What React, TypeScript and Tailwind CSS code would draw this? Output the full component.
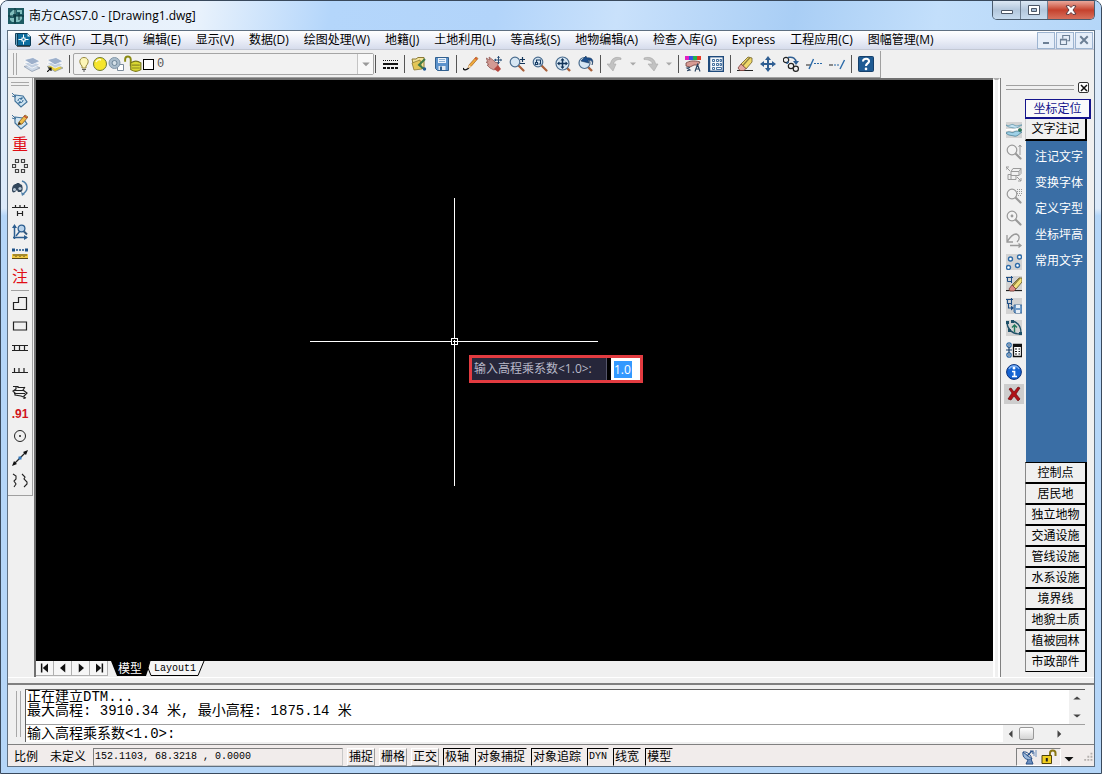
import React from "react";

const UI = "font-['Open_Sans','Noto_Sans_CJK_SC',sans-serif]";
const SONG = "font-['Liberation_Mono','Noto_Sans_CJK_SC',monospace]";

function Icon({ children, className = "size-4" }: { children: React.ReactNode; className?: string }) {
  return (
    <svg viewBox="0 0 16 16" className={`${className} shrink-0`} fill="none" aria-hidden="true">
      {children}
    </svg>
  );
}

function Lens({ color = "#4a6c8e", fill = "#d6e6f3", handle = "#a8603a" }: { color?: string; fill?: string; handle?: string }) {
  return (
    <>
      <path d="M9.5 9.5 14.5 14.5" stroke={handle} strokeWidth="2.2" strokeLinecap="round" />
      <circle cx="6" cy="6" r="4.8" fill={fill} stroke={color} strokeWidth="1.2" />
    </>
  );
}

function Layers({ last }: { last: string }) {
  return (
    <g strokeWidth=".7">
      <path d="M0 10.500 9 8.500l7 3.500-8 3.500z" fill={last} stroke="#8593a8" />
      <path d="M0 7.300 9 5.300l7 3.500-8 3.300z" fill="#c0cee0" stroke="#fff" />
      <path d="M0 3.800 9 1.500l7 3.700-8 3.600z" fill="#9db0cb" stroke="#fff" />
    </g>
  );
}

const Logo = (
  <>
    <rect width="16" height="16" fill="#1d5a63" />
    <path d="M2 8V5l3-3h3v4H5v3zM9 2h5v4h-2V4H9zM8 8h6v3l-3 3H8zM2 10h4v4H4l-2-2z" fill="#82bdbd" />
    <path d="M7 0v16M0 8h16M11 5v7" stroke="#0b3138" />
  </>
);

const Doc = (
  <>
    <path d="M.5 1.500h3v12h-2l-1-1z" fill="#6aa5c4" stroke="#16445f" />
    <path d="M2.500 1.500h10l3 3v9h-13z" fill="#0d6d9e" stroke="#0c3b57" />
    <path d="M12.500 1.500v3h3z" fill="#e8f4fa" />
    <path d="M8.500 2.500v10M3.500 7.500h10" stroke="#fff" />
    <rect x="7" y="6" width="3" height="3" fill="#0d6d9e" stroke="#fff" />
    <path d="M2 14.500h13" stroke="#555" />
  </>
);

const mainGroups: { name: string; art: React.ReactNode; narrow?: boolean }[][] = [
  [
    {
      name: "线型",
      art: (
        <>
          <path d="M1 4.500h15" stroke="#111" strokeDasharray="1 1" />
          <path d="M1 8h15" stroke="#111" strokeWidth="2" />
          <path d="M1 12h15" stroke="#111" strokeWidth="2" strokeDasharray="3 1" />
        </>
      ),
    },
  ],
  [
    {
      name: "打开",
      art: (
        <>
          <path d="M1 3h4l2-1.500h6V12H3z" fill="#f3e39a" stroke="#8c7a35" />
          <path d="M3 14 1 7l8-3 2 9z" fill="#e3c657" stroke="#8c7a35" strokeWidth=".8" />
          <path d="M14 3 8 9l5 4" stroke="#3f7a46" strokeWidth="2" />
          <circle cx="13.500" cy="13" r="1.700" fill="#225a94" />
        </>
      ),
    },
    {
      name: "保存",
      art: (
        <>
          <path d="M1.500 1.500h13v13h-11l-2-2z" fill="#5d93cc" stroke="#31608f" />
          <path d="M4 2h8v5H4z" fill="#eef4fb" />
          <path d="M5 3.500h6M5 5.500h6" stroke="#8cb0d4" />
          <path d="M4.500 10h7v4h-7z" fill="#dfe8f1" />
          <path d="M6 10.500h2V14H6z" fill="#31608f" />
        </>
      ),
    },
  ],
  [
    {
      name: "画笔",
      art: (
        <>
          <path d="M0 12c1 3 3 2 6 0" stroke="#111" strokeWidth="1.400" />
          <path d="m5 12 1-3 7-8 2 1.500-7 8z" fill="#efaa3b" stroke="#a45e1b" strokeWidth=".7" />
          <path d="m5 12 1-3 2 1.500z" fill="#f8e3bd" />
          <path d="m12 2 2 1.500" stroke="#d4503c" strokeWidth="1.500" />
        </>
      ),
    },
    {
      name: "平移",
      art: (
        <>
          <path d="m0 2 4 2-1-3 4 3 3 3 1-1 1 3-1 3-3 2-4-2-3-3 2-.500L0 6l2 0z" fill="#d39a93" stroke="#96605a" strokeWidth=".8" />
          <path d="m8 13 4-4 3 4-3 3z" fill="#b5473f" />
          <path d="M12.500 0v8M8.500 4h7" stroke="#2b5078" />
          <path d="m11 2 1.500-2L14 2zM11 6l1.500 2L14 6zM10 2.500 8 4l2 1.500zM14.500 2.500 16 4l-1.500 1.500z" fill="#2b5078" />
        </>
      ),
    },
    {
      name: "实时缩放",
      art: (
        <>
          <Lens />
          <path d="M11 3.500h5M13.500 1v5M11 7.500h5" stroke="#14365a" strokeWidth="1.200" />
        </>
      ),
    },
    {
      name: "窗口缩放",
      art: (
        <>
          <Lens />
          <path d="M4.500 6V4h4v4h-2M3.500 8.500h2v-2h-2z" stroke="#1b3e66" strokeWidth="1.100" />
        </>
      ),
    },
    {
      name: "全图",
      art: (
        <>
          <path d="m11 11 4 4" stroke="#a8603a" strokeWidth="2.400" />
          <circle cx="7.500" cy="7.500" r="6.500" fill="#d6e6f3" stroke="#4a6c8e" strokeWidth="1.200" />
          <path d="M7.500 3v9M3 7.500h9" stroke="#12345a" strokeWidth="1.500" />
          <path d="m5.500 4.500 2-2.500 2 2.500zM5.500 10.500l2 2.500 2-2.500zM4.500 5.500 2 7.500l2.500 2zM10.500 5.500l2.500 2-2.500 2z" fill="#12345a" />
        </>
      ),
    },
    {
      name: "前图",
      art: (
        <>
          <path d="m10 11 4 4" stroke="#a8603a" strokeWidth="2.400" />
          <circle cx="6.500" cy="7" r="5.500" fill="#d6e6f3" stroke="#4a6c8e" strokeWidth="1.200" />
          <path d="M14 9c1-3 0-5-4-5l1 3-8-2 5-5 .5 2C14 1 16 4 14 9z" fill="#1c4f8e" stroke="#12345a" strokeWidth=".6" />
        </>
      ),
    },
  ],
  [
    {
      name: "放弃",
      art: <path d="M14 2C8 0 4 3 3.500 8H0l6 7 3-7H6.500C7 5 10 3 14 3.500z" fill="#c2c2c2" stroke="#a8a8a8" strokeWidth=".6" />,
    },
    { name: "放弃列表", narrow: true, art: <path d="M4 6h8l-4 4z" fill="#a8a8a8" /> },
    {
      name: "重做",
      art: <path d="M1 2c6-2 11 1 11.500 6H15l-4 7-6-7h4.500C9 5 6 3.500 1 3.500z" fill="#c2c2c2" stroke="#a8a8a8" strokeWidth=".6" />,
    },
    { name: "重做列表", narrow: true, art: <path d="M4 6h8l-4 4z" fill="#a8a8a8" /> },
  ],
  [
    {
      name: "特性匹配",
      art: (
        <>
          <path d="M0 0h4v4H0z" fill="#e01fc2" />
          <path d="M4 0h4v4H4z" fill="#3553e0" />
          <path d="M8 0h4v4H8z" fill="#21b34c" />
          <path d="M12 0h4v4h-4z" fill="#e33a26" />
          <path d="M1 7c3-2 8-3 14-1l-2 3-4 0-4 2-4-1z" fill="#d89b94" stroke="#6e3c37" strokeWidth=".8" />
          <path d="m5 11.500-3 .5 3 2-3 .7M10 15.500l2.500-7 2.500 7M11 13h3" stroke="#28415f" strokeWidth="1.100" />
        </>
      ),
    },
    {
      name: "工具选项板",
      art: (
        <>
          <rect x=".7" y=".7" width="14.600" height="14.600" fill="#f3f7fb" stroke="#1e4a7c" strokeWidth="1.400" />
          <path d="M1 1v14" stroke="#1e4a7c" strokeWidth="2.500" />
          <path d="M4.500 3.500h2v2h-2zM4.500 7.500h2v2h-2zM4.500 11.500h2v2h-2zM8.500 3.500h2v2h-2zM8.500 7.500h2v2h-2zM12 3.500h1.500v2H12zM12 7.500h1.500v2H12zM8.500 11.500h5v2h-5z" stroke="#305f92" strokeWidth=".9" />
        </>
      ),
    },
  ],
  [
    {
      name: "删除",
      art: (
        <>
          <path d="M0 14.500h16" stroke="#222" />
          <path d="m4 8 7-7 4 1v4l-6 7z" fill="#f0d96b" stroke="#6e602b" strokeWidth=".8" />
          <path d="m13 1.500-8 9" stroke="#8b7c3c" strokeWidth="1.200" />
          <path d="m1 12 3-4 5 4.500-2 2H3z" fill="#e3a8a2" stroke="#7c403b" strokeWidth=".8" />
        </>
      ),
    },
    {
      name: "移动",
      art: (
        <>
          <path d="M8 2v12M2 8h12" stroke="#2f5e92" strokeWidth="2" />
          <path d="m5 4 3-4 3 4zM5 12l3 4 3-4zM4 5 0 8l4 3zM12 5l4 3-4 3z" fill="#2f5e92" />
        </>
      ),
    },
    {
      name: "复制",
      art: (
        <>
          <circle cx="3" cy="4" r="2.700" stroke="#222" strokeWidth="1.200" />
          <circle cx="8" cy="10" r="2.700" stroke="#222" strokeWidth="1.200" />
          <circle cx="12.800" cy="12.800" r="2.600" stroke="#222" strokeWidth="1.200" />
          <path d="M5 1.500c5-1 8 1 8 5M6 6c-1 0-2 1-2 2" stroke="#2d5d92" strokeWidth="1.500" />
          <path d="M10 5h6l-3 4z" fill="#2d5d92" />
        </>
      ),
    },
    {
      name: "修剪",
      art: (
        <>
          <path d="M0 9h5" stroke="#222" strokeWidth="1.200" />
          <path d="M3 13 7.500 3" stroke="#2b6aa8" strokeWidth="1.400" />
          <path d="M8 7.500h8" stroke="#2b6aa8" strokeWidth="1.200" strokeDasharray="2 1" />
        </>
      ),
    },
    {
      name: "延伸",
      art: (
        <>
          <path d="M0 9h4" stroke="#222" strokeWidth="1.200" />
          <path d="M5 9h6" stroke="#2b6aa8" strokeWidth="1.200" strokeDasharray="2 1" />
          <path d="M11 13 15.500 4" stroke="#2b6aa8" strokeWidth="1.400" />
        </>
      ),
    },
  ],
  [
    {
      name: "帮助",
      art: (
        <>
          <rect x=".5" y=".5" width="15" height="15" rx="1" fill="#1f5b93" stroke="#16406b" />
          <path d="M5 5.500c0-4 6.500-3.500 6 0-.3 2-3 2-3 4.500" stroke="#fff" strokeWidth="2.100" />
          <circle cx="8" cy="12.900" r="1.300" fill="#fff" />
        </>
      ),
    },
  ],
];

const Tag = (
  <>
    <path d="m3 3 8 1 4 6-6 5-6-6z" fill="#cfe4f1" stroke="#43749c" strokeWidth="1.200" />
    <path d="M0 1l4 4M0 4l3 1" stroke="#43749c" />
  </>
);

const leftTop: { name: string; art?: React.ReactNode; text?: string }[] = [
  {
    name: "查看实体编码",
    art: (
      <>
        {Tag}
        <path d="M6 9c0-3 3-3 4-2M11 8c0 3-3 3-4 2M10 5v2H8M7 12v-2h2" stroke="#2a6291" />
      </>
    ),
  },
  {
    name: "加入实体编码",
    art: (
      <>
        {Tag}
        <path d="m6 11 1-3 6-7 3 2-6 7z" fill="#f0bd4a" stroke="#865b1c" strokeWidth=".8" />
        <path d="m12 2 3 2" stroke="#c24a3a" strokeWidth="1.500" />
        <path d="m6 11 1-3 2 1.500z" fill="#222" />
      </>
    ),
  },
  { name: "重构", text: "重" },
  {
    name: "批量选目标",
    art: (
      <path
        d="M3.500 1.500h3v3h-3zM9.500 1.500h3v3h-3zM.5 6.500h3v3h-3zM12.500 6.500h3v3h-3zM3.500 11.500h3v3h-3zM9.500 11.500h3v3h-3z"
        stroke="#444"
        strokeWidth="1.200"
      />
    ),
  },
  {
    name: "线型换向",
    art: (
      <>
        <path d="M0 10c0-4 2-6 4-6l1-1h2l1 1 2 1c1 3 1 6-1 7H6l-1-2-2 2c-2 1-3 0-3-2z" fill="#33475c" />
        <circle cx="2.500" cy="9.500" r="1.500" fill="#b6c5d3" />
        <circle cx="8" cy="8.500" r="1.600" fill="#b6c5d3" />
        <path d="M10 1c6 2 7 9 1 13" stroke="#4f7fa8" strokeWidth="1.500" />
        <path d="m9 12 1 4 3-2z" fill="#4f7fa8" />
      </>
    ),
  },
  { name: "坎高", art: <path d="M0 5.500h16M3.500 3v2.500M8 3v2.500M12.500 3v2.500M5.500 9v5M10.500 9v5M5.500 11.500h5" stroke="#222" strokeWidth="1.200" /> },
  {
    name: "坐标查询",
    art: (
      <>
        <path d="M2.500 15V2M1 13.500h14" stroke="#2c5e90" strokeWidth="1.500" />
        <path d="m0 4 2.500-4L5 4zM12 11l4 2.500-4 2.500z" fill="#2c5e90" />
        <path d="m4 12 4-5" stroke="#2c5e90" strokeWidth="1.400" />
        <circle cx="9.500" cy="4.500" r="3.400" fill="#b8d2ea" stroke="#2c5e90" strokeWidth="1.300" />
        <path d="m12 7.500 3 3" stroke="#34587c" strokeWidth="2" />
      </>
    ),
  },
  {
    name: "距离查询",
    art: (
      <>
        <path d="M1 4h14" stroke="#1b4f86" strokeWidth="1.500" strokeDasharray="2 1" />
        <path d="M0 2.500h3v3H0zM13 2.500h3v3h-3z" fill="#1b4f86" />
        <path d="M0 8h16v5H0z" fill="#f1c945" />
        <path d="M0 12.500h16M2 8v2M4 8v3M6 8v2M8 8v3M10 8v2M12 8v3M14 8v2" stroke="#5b4a12" />
      </>
    ),
  },
  { name: "文字注记", text: "注" },
];

const leftBottom: { name: string; art?: React.ReactNode; text?: string }[] = [
  { name: "多点房屋", art: <path d="M1.500 6.500h5v-5h8v12h-13z" stroke="#222" strokeWidth="1.200" /> },
  { name: "四点房屋", art: <path d="M1.500 4h13v8h-13z" stroke="#222" strokeWidth="1.200" /> },
  { name: "依比例围墙", art: <path d="M0 5.500h16M0 10.500h16M2.500 5v5M7.500 5v5M12.500 5v5" stroke="#222" strokeWidth="1.200" /> },
  { name: "陡坎", art: <path d="M0 10.500h16M2.500 6v4M7 6v4M12 6v4" stroke="#222" strokeWidth="1.200" /> },
  {
    name: "坡坎",
    art: <path d="M1 2.500h5v1h7M4 2v3L1 7l2 2v2l6 1 5 2M13 3l-2 3 4 3-3 3v3M2 6.500h9M2 9.500h11" stroke="#222" strokeWidth="1.200" />,
  },
  { name: "高程点", text: ".91" },
  {
    name: "图根点",
    art: (
      <>
        <circle cx="8" cy="8" r="5.500" stroke="#222" />
        <circle cx="8" cy="8" r="1" fill="#222" />
      </>
    ),
  },
  {
    name: "直线",
    art: (
      <>
        <path d="M2 14 14 2" stroke="#222" strokeWidth="1.300" />
        <path d="m0 16 2-5 3 3zM16 0l-5 2 3 3z" fill="#111" />
        <rect x="6.500" y="6.500" width="3" height="3" fill="#2f74b8" />
      </>
    ),
  },
  { name: "曲线", art: <path d="m1 2 3 2v3L2 9l2 3-2 3M10 2l3 3-1 2 3 3v2l-3 3" stroke="#222" strokeWidth="1.100" /> },
];

const gray = "#9a9a9a";
const rightIcons: { name: string; tint?: boolean; art: React.ReactNode }[] = [
  {
    name: "图层",
    tint: true,
    art: (
      <>
        <path d="M0 3c4 2 5-2 8 0s5 0 8 0c-3 1-5 4-8 3S3 6 0 3z" fill="#c5e3f2" stroke="#6599ad" strokeWidth=".8" />
        <path d="M0 11c4-3 5 1 8-1s5 0 8 0c-3 2-5 5-8 4s-5 0-8-3z" fill="#9ed0e6" stroke="#4b8198" strokeWidth=".8" />
        <path d="M0 8c4-1 7 1 12-1" stroke="#fff" strokeWidth="2" />
        <path d="M12 8h4M14 6v4" stroke="#1f7050" strokeWidth="1.300" />
      </>
    ),
  },
  {
    name: "实时缩放",
    art: (
      <>
        <Lens color={gray} fill="#f3f3f3" handle={gray} />
        <path d="M14 1v10M12.500 3 14 1l1.500 2" stroke={gray} />
      </>
    ),
  },
  {
    name: "三维视图",
    art: (
      <>
        <path d="M5 5.500h8v4H5zM5 5.500l2-3h8l-2 3M15 2.500v5l-2 2M2 8.500h3v5h5v-4M2 8.500v5h3" stroke={gray} />
        <path d="m0 1 4 4M0 4V1h3M11 11l4 4M15 12v3h-3" stroke={gray} />
      </>
    ),
  },
  {
    name: "范围缩放",
    art: (
      <>
        <Lens color={gray} fill="#f3f3f3" handle={gray} />
        <path d="M11 1.500h5M11 3.500h5M11 5.500h5M12 7.500h4" stroke={gray} strokeDasharray="1 1" />
      </>
    ),
  },
  {
    name: "中心缩放",
    art: (
      <>
        <Lens color={gray} fill="#f3f3f3" handle={gray} />
        <circle cx="6" cy="6" r="1.400" fill={gray} />
      </>
    ),
  },
  {
    name: "回退",
    art: <path d="M1 3v7h6M1 10c3-5 6-8 9-8 4 1 4 5 1 8M4 13.500h11M12.500 11.500l2.500 2-2.500 2" stroke={gray} strokeWidth="1.300" />,
  },
  {
    name: "选点",
    tint: true,
    art: (
      <g fill="#fff" stroke="#2f6ca8" strokeWidth="1.400">
        <circle cx="4.500" cy="5" r="2" />
        <circle cx="13.500" cy="3" r="2" />
        <circle cx="2.500" cy="13.500" r="2" />
        <circle cx="11.500" cy="11.500" r="2" />
      </g>
    ),
  },
  {
    name: "擦除",
    tint: true,
    art: (
      <>
        <path d="M1.500 1.500h4v4h-4zM0 1.500h7M5.500 0v7" stroke="#1f4f86" />
        <path d="M0 14.500h16" stroke="#222" />
        <path d="m6 9 7-7 3 0v4l-6 7z" fill="#f3e17c" stroke="#5b5024" strokeWidth=".8" />
        <path d="m14 2-7 8" stroke="#8b7c3c" strokeWidth="1.200" />
        <path d="m3 13 3-4 4 4-2 2H4z" fill="#dc8b85" stroke="#7c403b" strokeWidth=".8" />
      </>
    ),
  },
  {
    name: "保存块",
    tint: true,
    art: (
      <>
        <path d="M1.500 1.500h4v4h-4zM0 1.500h7M5.500 0v7M2.500 6v4H6" stroke="#1f4f86" strokeWidth="1.100" />
        <path d="m5 7.500 3 2.500-3 2.500z" fill="#1f4f86" />
        <path d="M8 7h8v8H9l-1-1z" fill="#6f9bc9" stroke="#44719f" />
        <path d="M10 7h4v3h-4zM10 12h4v3h-4z" fill="#e6eef6" />
      </>
    ),
  },
  {
    name: "编辑曲线",
    tint: true,
    art: (
      <>
        <path d="M1 2c0 6 4 12 13 12M6 1c5 1 9 5 9 12" stroke="#1f5068" strokeWidth="1.300" />
        <path d="M8.500 12V5M6 7.500 8.500 5 11 7.500" stroke="#20775b" strokeWidth="1.400" />
        <path d="M0 1h3v3H0zM5 0h3v3H5zM13 12h3v3h-3zM2 9h3v3H2z" fill="#1f5068" />
      </>
    ),
  },
  {
    name: "列表",
    art: (
      <>
        <circle cx="3" cy="3" r="2.200" stroke="#2f6ca8" strokeWidth="1.300" />
        <circle cx="3" cy="13" r="2.200" stroke="#2f6ca8" strokeWidth="1.300" />
        <path d="M3 5v6M0 8h6M2 3h2M2 13h2" stroke="#173f6c" strokeWidth="1.200" />
        <path d="M7.500 2.500h8v12h-8z" fill="#fff" stroke="#111" strokeWidth="1.300" />
        <path d="M7 4h9" stroke="#111" strokeWidth="2" />
        <path d="M9 7h2M12.500 7H14M9 9.500h2M12.500 9.500H14M9 12h2M12.500 12H14" stroke="#111" />
      </>
    ),
  },
  {
    name: "信息",
    art: (
      <>
        <circle cx="8" cy="8" r="7.400" fill="#1563d2" stroke="#0b2f78" />
        <path d="M3 5c2-4 8-4 10 0" stroke="#7fb2f4" strokeWidth="1.500" />
        <circle cx="8" cy="4" r="1.500" fill="#fff" />
        <path d="M6 7.500h2.500v5M6 12.500h5" stroke="#fff" strokeWidth="1.700" />
      </>
    ),
  },
  {
    name: "关闭",
    tint: true,
    art: <path d="m3 3 2-1 3 4 4-5 2 1-4 6 4 5-2 2-4-5-3 4-3-1 4-6z" fill="#b01218" stroke="#6f080c" strokeWidth=".7" />,
  },
];

const menus = [
  "文件(F)", "工具(T)", "编辑(E)", "显示(V)", "数据(D)", "绘图处理(W)", "地籍(J)", "土地利用(L)",
  "等高线(S)", "地物编辑(A)", "检查入库(G)", "Express", "工程应用(C)", "图幅管理(M)",
];
const annotations = ["注记文字", "变换字体", "定义字型", "坐标坪高", "常用文字"];
const categories = ["控制点", "居民地", "独立地物", "交通设施", "管线设施", "水系设施", "境界线", "地貌土质", "植被园林", "市政部件"];
const modes = [
  { label: "捕捉", on: false },
  { label: "栅格", on: false },
  { label: "正交", on: false },
  { label: "极轴", on: true },
  { label: "对象捕捉", on: true },
  { label: "对象追踪", on: true },
  { label: "DYN", on: true },
  { label: "线宽", on: true },
  { label: "模型", on: true },
];

function TitleBar() {
  return (
    <header className="flex h-[29px] shrink-0 items-start bg-[linear-gradient(100deg,#e4effb_0%,#e9f2fc_18%,#b4d6fb_30%,#b2d4fa_45%,#c9e1fb_56%,#a9cef5_72%,#c3dffb_85%,#b4d6f8_100%)] pl-[7px]">
      <div className="flex h-[29px] flex-1 items-center gap-[5px]">
        <Icon>{Logo}</Icon>
        <h1 className="text-xs whitespace-nowrap text-black">南方CASS7.0 - [Drawing1.dwg]</h1>
      </div>
      <div className="mr-[6px] flex h-[19px] overflow-hidden rounded-b-[5px] border border-t-0 border-[#4b5c6e]">
        <button aria-label="最小化" className="flex w-7 items-center justify-center border-r border-[#6d7e91] bg-linear-to-b from-[#dce8f4] via-[#b3c7dc] to-[#c7dbef]">
          <Icon><path d="M2.500 8.500h11v3h-11z" fill="#fff" stroke="#4b5666" /></Icon>
        </button>
        <button aria-label="最大化" className="flex w-[27px] items-center justify-center border-r border-[#6d7e91] bg-linear-to-b from-[#dce8f4] via-[#b3c7dc] to-[#c7dbef]">
          <Icon><path d="M2.500 3.500h11v9h-11z" fill="#fff" stroke="#4b5666" /><path d="M5.500 6.500h5v3h-5z" fill="#a9bfd6" stroke="#4b5666" /></Icon>
        </button>
        <button aria-label="关闭" className="flex w-[46px] items-center justify-center bg-linear-to-b from-[#e8a79b] via-[#c5402c] to-[#d7705c]">
          <Icon><path d="m3 4 3-.5 2 2 2-2 3 .5-3 4 3 4-3 .5-2-2-2 2-3-.5 3-4z" fill="#fff" stroke="#5a3a40" /></Icon>
        </button>
      </div>
    </header>
  );
}

function MenuBar() {
  const mdi = "flex h-[17px] w-[18px] items-center justify-center border border-[#9db4d0] bg-[#e6eef9]";
  return (
    <nav aria-label="菜单" className="flex h-[19px] shrink-0 items-center border-b border-[#c3c8d4] bg-linear-to-b from-white via-[#eceff8] to-[#d6dcec] pl-[7px]">
      <Icon>{Doc}</Icon>
      <div className="ml-[7px] flex flex-1 gap-[15px]">
        {menus.map((m) => (
          <button key={m} className="text-xs leading-4 whitespace-nowrap text-black">{m}</button>
        ))}
      </div>
      <div className="mr-px flex gap-px">
        <button aria-label="最小化图形" className={mdi}><Icon className="size-3"><path d="M4 12h8" stroke="#6c7f95" strokeWidth="2.500" /></Icon></button>
        <button aria-label="还原图形" className={mdi}><Icon className="size-3"><path d="M5 6V2h9v7h-3M2 7h8v7H2zM2 8h8" stroke="#6c7f95" strokeWidth="1.500" /></Icon></button>
        <button aria-label="关闭图形" className={mdi}><Icon className="size-3"><path d="m3 3 10 10M13 3 3 13" stroke="#6c7f95" strokeWidth="2.600" /></Icon></button>
      </div>
    </nav>
  );
}

function Separator() {
  return <span className="mr-[2px] ml-[3px] h-[18px] w-px bg-[#555]" />;
}

function Toolbar() {
  const btn = "flex h-5 w-[23px] items-center justify-center";
  return (
    <div className="flex h-7 shrink-0 items-start bg-[#f0f0f0] pt-px">
      <div role="toolbar" aria-label="标准" className="flex h-[27px] items-center border-r border-b border-[#a0a0a0] pr-[3px] pl-[5px]">
        <span className="mr-[3px] h-[22px] w-1 border-x border-[#a8a8a8]" />
        <button aria-label="图层管理" className={btn}><Icon><Layers last="#cbd7e6" /></Icon></button>
        <button aria-label="图层置为当前" className={btn}>
          <Icon><Layers last="#e8cf3a" /><path d="m0 16 4-4M1 12h3v3" stroke="#111" strokeWidth="1.200" /></Icon>
        </button>
        <Separator />
        <div className="ml-px flex h-[22px] w-[301px] items-center rounded-xs border border-[#a5a5a5] bg-[#f2f2f2] pl-[2px]">
          <Icon>
            <path d="M6 10C2 6 4 1.500 8 1.500s6 4.500 2 8.500v2H6z" fill="#fdf6b8" stroke="#8a7a2a" strokeWidth=".9" />
            <path d="M6 13.500h4M7 15h2" stroke="#5c5c5c" strokeWidth="1.200" />
          </Icon>
          <Icon>
            <circle cx="8" cy="8" r="6.500" fill="#f6e52c" stroke="#6f7a35" />
            <path d="M4 6c1-2 3-3 5-2" stroke="#fffbd0" strokeWidth="1.500" />
          </Icon>
          <Icon>
            <path d="M9.500 8.500h6v6h-6z" fill="#fff" stroke="#7a8a9a" />
            <circle cx="6.500" cy="7" r="5.500" fill="#a9bccb" stroke="#8398aa" />
            <circle cx="6.500" cy="7" r="2.500" fill="#d5e0e8" stroke="#6d8699" />
          </Icon>
          <Icon className="size-[18px]">
            <path d="M1 6V4c0-3.500 5-3.500 5 0v6" stroke="#8a8a12" strokeWidth="1.700" />
            <path d="M6 7c3-2 6-2 9 0v6c-3 2-6 2-9 0z" fill="#d9d732" stroke="#77751a" />
            <path d="M7 9h7M7 11.500h7" stroke="#8b8920" />
          </Icon>
          <span className="mr-[3px] ml-px size-[11px] border border-black bg-white" />
          <select aria-label="图层" className={`${SONG} h-4 flex-1 appearance-none bg-transparent text-xs leading-4 text-[#555] outline-none`}>
            <option>0</option>
          </select>
          <span className="flex h-full w-4 items-center justify-center border-l border-[#c4c4c4] bg-[#f8f8f8]">
            <Icon className="size-3"><path d="M3 6h10l-5 5z" fill="#9a9a9a" /></Icon>
          </span>
        </div>
        {mainGroups.map((g, i) => (
          <React.Fragment key={i}>
            {i === 0 ? <span className="mr-[2px] ml-px h-[18px] w-px bg-[#555]" /> : <Separator />}
            {g.map((t) => (
              <button key={t.name} aria-label={t.name} className={t.narrow ? "flex h-5 w-[13px] items-center justify-center" : btn}>
                <Icon className={t.narrow ? "size-3" : "size-4"}>{t.art}</Icon>
              </button>
            ))}
          </React.Fragment>
        ))}
      </div>
    </div>
  );
}

function ToolColumn({ items }: { items: typeof leftTop }) {
  return (
    <>
      {items.map((t) => (
        <button key={t.name} aria-label={t.name} className="flex h-[22px] w-6 items-center justify-center">
          {t.art ? (
            <Icon>{t.art}</Icon>
          ) : (
            <span className={t.text === ".91" ? "font-['Liberation_Sans',sans-serif] text-xs leading-4 font-bold text-[#d0141c]" : "text-base leading-5 text-[#e00d14]"}>{t.text}</span>
          )}
        </button>
      ))}
    </>
  );
}

function LeftToolbar() {
  return (
    <aside className="w-[26px] shrink-0 bg-[#f0f0f0]">
      <div role="toolbar" aria-orientation="vertical" aria-label="CASS实用工具栏" className="flex w-[25px] flex-col border-r border-b border-[#a0a0a0] pt-1 pb-1">
        <span className="mx-[3px] mb-[3px] h-1 border-y border-[#a8a8a8]" />
        <ToolColumn items={leftTop} />
        <span className="mx-[3px] mt-[3px] mb-[2px] h-px bg-[#a0a0a0]" />
        <ToolColumn items={leftBottom} />
      </div>
    </aside>
  );
}

function DrawingArea() {
  return (
    <section aria-label="绘图区" className="relative min-h-0 flex-1 overflow-hidden bg-black">
      <svg className="absolute top-[118px] left-[274px] h-[288px] w-[288px]" viewBox="0 0 288 288" shapeRendering="crispEdges" fill="none" stroke="#fff" aria-hidden="true">
        <path d="M144.500 0v288M0 143.500h288" />
        <rect x="141.500" y="140.500" width="6" height="6" fill="#000" />
        <path d="M144.500 142v4M143 143.500h4" />
      </svg>
      <div className="absolute top-[275px] left-[433px] flex h-7 w-[174px] items-stretch border-[3px] border-[#e23b40] bg-black">
        <label htmlFor="dyn" className="flex w-[135px] items-center border-r border-[#55556a] bg-[#26263a] pl-[2px] text-xs whitespace-nowrap text-[#b8b8c8]">
          输入高程乘系数&lt;1.0&gt;:
        </label>
        <span className="ml-1 flex flex-1 items-center bg-white pl-[3px]">
          <input id="dyn" defaultValue="1.0" className="h-[17px] w-[18px] bg-[#3399ff] p-0 text-xs leading-4 text-white outline-none" />
        </span>
      </div>
    </section>
  );
}

function LayoutTabs() {
  const nav = "flex h-[15px] w-[18px] items-center justify-center border-r border-b border-[#b0b0b0] bg-[#f6f6f6]";
  return (
    <div className="flex h-4 shrink-0 bg-[#f0f0f0]">
      <div className="flex">
        <button aria-label="首个布局" className={nav}><Icon className="size-3"><path d="M3.500 2v12" stroke="#111" strokeWidth="2" /><path d="M12 2v12L5 8z" fill="#111" /></Icon></button>
        <button aria-label="上一布局" className={nav}><Icon className="size-3"><path d="M11 2v12L4 8z" fill="#111" /></Icon></button>
        <button aria-label="下一布局" className={nav}><Icon className="size-3"><path d="M5 2v12l7-6z" fill="#111" /></Icon></button>
        <button aria-label="末个布局" className={nav}><Icon className="size-3"><path d="M12.500 2v12" stroke="#111" strokeWidth="2" /><path d="M4 2v12l7-6z" fill="#111" /></Icon></button>
      </div>
      <button className="relative ml-[3px] h-[15px] w-9 text-white">
        <svg viewBox="0 0 40 15" className="absolute top-0 left-0 h-[15px] w-10" aria-hidden="true">
          <path d="M0 0h40l-5 15H6z" fill="#000" />
        </svg>
        <span className="relative block pl-[7px] text-left text-xs leading-[14px] whitespace-nowrap">模型</span>
      </button>
      <button className="relative h-[15px] w-[58px] text-black">
        <svg viewBox="0 0 58 15" className="absolute top-0 left-0 h-[15px] w-[58px]" fill="none" aria-hidden="true">
          <path d="M3 0 1 7l3 7.500h47L57 0" fill="#f6f6f6" stroke="#000" />
        </svg>
        <span className={`${SONG} relative block pl-[7px] text-left text-[10px] leading-[14px]`}>Layout1</span>
      </button>
    </div>
  );
}

function ScreenMenu() {
  return (
    <aside className="flex w-[94px] shrink-0 flex-col border-l border-[#808080] bg-[#f0f0f0] pt-1">
      <div className="flex h-[11px] shrink-0 items-center gap-1 pl-[5px]">
        <span className="h-[5px] w-[68px] border-y border-[#a0a0a0]" />
        <button aria-label="关闭菜单" className="flex size-[11px] items-center justify-center rounded-xs border border-[#333] bg-white">
          <Icon className="size-2"><path d="m2 2 12 12M14 2 2 14" stroke="#111" strokeWidth="3" /></Icon>
        </button>
      </div>
      <div className="mt-[6px] flex min-h-0 flex-1">
        <div className="flex w-6 flex-col items-center pt-5 pl-[2px]">
          {rightIcons.map((t) => (
            <button key={t.name} aria-label={t.name} className="flex h-[22px] w-5 items-center justify-center">
              <span className={t.name === "关闭" ? "flex h-5 w-5 items-center justify-center bg-[#cdcdcd]" : t.tint ? "bg-[#d3d3d3]" : ""}>
                <Icon>{t.art}</Icon>
              </span>
            </button>
          ))}
        </div>
        <div className="mb-[5px] flex w-[66px] flex-col text-xs">
          <button className="h-5 shrink-0 border-2 border-t border-l border-[#14148c] bg-[#fafafa] leading-4 text-[#14148c]">坐标定位</button>
          <button className="h-[22px] w-[62px] shrink-0 border-r-2 border-b-2 border-l border-black border-l-[#ccc] bg-[#f0f0f0] leading-4 text-black">文字注记</button>
          <div className="ml-px flex min-h-0 w-[61px] flex-1 flex-col items-start bg-[#3a6ea5] pt-[3px] pl-[9px]">
            {annotations.map((a) => (
              <button key={a} className="h-[26px] whitespace-nowrap text-white">{a}</button>
            ))}
          </div>
          {categories.map((c) => (
            <button key={c} className="h-[21px] w-[62px] shrink-0 border-t border-r-2 border-b border-l border-black border-l-[#888] bg-[#f0f0f0] leading-4 text-black">{c}</button>
          ))}
        </div>
      </div>
    </aside>
  );
}

function CommandWindow() {
  return (
    <section aria-label="命令行" className="flex h-[61px] shrink-0 border-t-2 border-[#808080] bg-[#f0f0f0] pt-1">
      <div className="flex w-[17px] justify-center">
        <span className="mt-[2px] ml-1 h-[46px] w-[5px] border-x border-[#a8a8a8]" />
      </div>
      <div className={`${SONG} mr-[9px] flex h-[53px] min-w-0 flex-1 flex-col border-t border-l border-[#606060] bg-white text-sm text-black`}>
        <div className="flex h-[35px] shrink-0 border-b border-[#a0a0a0]">
          <div className="flex-1 overflow-hidden pl-px whitespace-pre">
            <p className="h-[14px] leading-[14px]">正在建立DTM...</p>
            <p className="h-[14px] leading-[14px]">最大高程: 3910.34 米, 最小高程: 1875.14 米</p>
          </div>
          <div className="flex w-4 flex-col justify-between bg-[#f0f0f0]">
            <button aria-label="向上滚动" className="flex h-4 items-center justify-center"><Icon className="size-3"><path d="M3 10h10L8 6z" fill="#444" /></Icon></button>
            <button aria-label="向下滚动" className="flex h-4 items-center justify-center"><Icon className="size-3"><path d="M3 6h10l-5 4z" fill="#444" /></Icon></button>
          </div>
        </div>
        <div className="flex h-[17px] items-center">
          <label htmlFor="cmd" className="pl-px leading-[14px] whitespace-pre">输入高程乘系数&lt;1.0&gt;:</label>
          <input id="cmd" className="h-4 min-w-0 flex-1 bg-transparent outline-none" />
          <div className="flex h-full w-[82px] items-center bg-[#f0f0f0]">
            <button aria-label="向左滚动" className="flex h-4 w-4 items-center justify-center"><Icon className="size-3"><path d="M10 3v10L5 8z" fill="#444" /></Icon></button>
            <span className="h-[13px] w-[15px] rounded-xs border border-[#989898] bg-linear-to-b from-white to-[#d4d4d4]" />
            <button aria-label="向右滚动" className="ml-[17px] flex h-4 w-4 items-center justify-center"><Icon className="size-3"><path d="M6 3v10l5-5z" fill="#444" /></Icon></button>
          </div>
        </div>
      </div>
    </section>
  );
}

function StatusBar() {
  return (
    <footer className="flex h-[22px] shrink-0 items-center border-t border-[#808080] bg-[#f1eceb] pt-[2px] pl-[6px] text-xs text-black">
      <span className="w-9">比例</span>
      <span className="w-[43px]">未定义</span>
      <output className={`${SONG} flex h-[18px] w-[250px] items-center border border-t-[#808080] border-r-[#c8c8c8] border-b-[#c8c8c8] border-l-[#808080] pl-px text-[10px] whitespace-pre`}>152.1103, 68.3218 , 0.0000</output>
      <div className="ml-1 flex flex-1 gap-1">
        {modes.map((m) => (
          <button
            key={m.label}
            aria-pressed={m.on}
            className={`flex h-[18px] items-center border px-px pt-px whitespace-nowrap ${m.label === "DYN" ? `${SONG} text-[10px]` : ""} ${
              m.on ? "border-t-black border-r-[#f1eceb] border-b-[#f1eceb] border-l-black" : "border-t-white border-r-[#9a9a9a] border-b-[#9a9a9a] border-l-white"
            }`}
          >
            {m.label}
          </button>
        ))}
      </div>
      <div className="flex h-[18px] w-[45px] items-center justify-center gap-1 border border-t-[#808080] border-r-white border-b-white border-l-[#808080]">
        <Icon>
          <path d="M2 3c-1 6 4 9 9 7z" fill="#9db9dc" stroke="#29518a" />
          <path d="M2 3c4-1 8 3 9 7" stroke="#29518a" />
          <path d="m6 7 5-5M9 2h3v3" stroke="#29518a" strokeWidth="1.200" />
          <path d="M7 11 5 15h7l-2-5" fill="#6c8fbf" stroke="#29518a" />
          <path d="M13 3v4M15 1v7" stroke="#6c8fbf" />
        </Icon>
        <Icon>
          <path d="M9 7V4c0-3.500 5.500-3.500 5.500 0v3" stroke="#8a7612" strokeWidth="2" />
          <path d="M1 6.500h9.500v8H1z" fill="#f1cf20" stroke="#4e430a" />
          <path d="M5.800 9v3.500" stroke="#222" strokeWidth="2" />
        </Icon>
      </div>
      <button aria-label="状态栏菜单" className="ml-[2px] flex w-3 items-center justify-center"><Icon className="size-3"><path d="M2 8h12l-6 6z" fill="#111" /></Icon></button>
      <Icon className="mr-px ml-2 size-[10px]"><path d="M12 1h3v3h-3zM7 6h3v3H7zM12 6h3v3h-3zM2 11h3v3H2zM7 11h3v3H7zM12 11h3v3h-3z" fill="#b5b0ae" /></Icon>
    </footer>
  );
}

export default function App() {
  return (
    <div className={`${UI} flex h-screen min-h-[600px] flex-col overflow-hidden rounded-t-lg border border-[#39495c] bg-[#b5d6f8]`}>
      <TitleBar />
      <div className="flex min-h-0 flex-1 bg-linear-to-b from-[#dceafa] from-24% to-[#b5d6f8] to-25% px-[6px] pb-[6px]">
        <main className="flex min-h-0 min-w-0 flex-1 flex-col border border-[#5f7082] bg-[#f0f0f0]">
          <MenuBar />
          <Toolbar />
          <div className="flex min-h-0 flex-1">
            <LeftToolbar />
            <div className="flex min-w-0 flex-1 flex-col border-t-2 border-l-2 border-[#707070]">
              <DrawingArea />
              <LayoutTabs />
            </div>
            <div className="w-[7px] shrink-0 border-t-2 border-r-2 border-l-2 border-t-[#b0b0b0] border-r-white border-l-white bg-[#f0f0f0]" />
            <ScreenMenu />
          </div>
          <div className="h-[6px] shrink-0 border-t border-white bg-[#f0f0f0]" />
          <CommandWindow />
          <StatusBar />
        </main>
      </div>
    </div>
  );
}
